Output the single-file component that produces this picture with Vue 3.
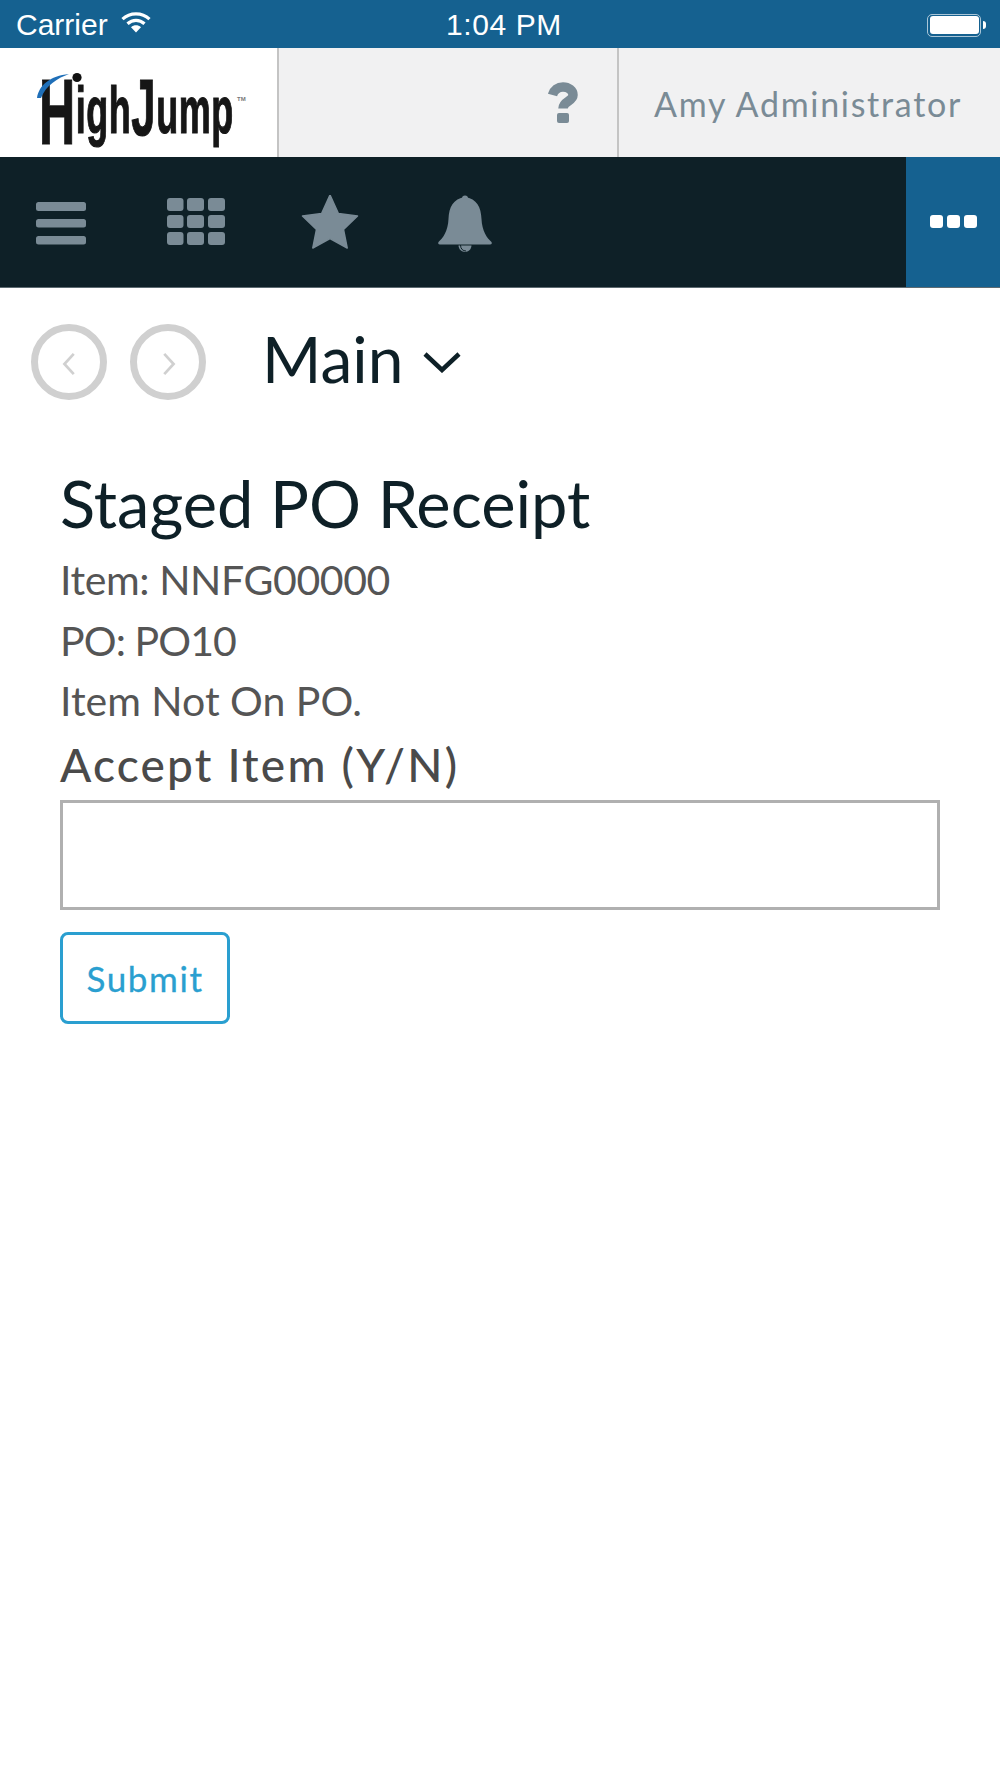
<script setup>
const lines = [
  { text: 'Item: NNFG00000', cls: 'wide' },
  { text: 'PO: PO10', cls: 'tight' },
  { text: 'Item Not On PO.', cls: 'plain' }
]
</script>

<template>
  <div class="page">
    <div class="status">
      <div class="status-left">
        <span>Carrier</span>
        <svg class="wifi" viewBox="0 0 30 22" width="30" height="22">
          <path d="M1.5 8.2C9 1 21 1 28.5 8.2" fill="none" stroke="#fff" stroke-width="3.2" />
          <path d="M6.5 12.8C11.5 8.2 18.5 8.2 23.5 12.8" fill="none" stroke="#fff" stroke-width="3.2" />
          <path d="M10 16.3C13 13.7 17 13.7 20 16.3L15 21.5Z" fill="#fff" />
        </svg>
      </div>
      <span class="time">1:04 PM</span>
      <div class="battery"><i class="battery-fill"></i><i class="battery-nub"></i></div>
    </div>

    <header class="top">
      <div class="logo">
        <svg class="swoosh" viewBox="0 0 50 30" width="50" height="30">
          <path d="M1 26C3 13 14 4 33 2C22 6 10 13 5 26Z" fill="#1f6fb8" />
          <circle cx="41" cy="5.5" r="4.6" fill="#111" />
        </svg>
        <div class="wordmark"><span class="big">H</span><span>igh</span><span class="bigj">J</span><span>ump</span></div>
        <span class="tm">TM</span>
      </div>
      <div class="help">
        <svg viewBox="0 0 30 41" width="30" height="41">
          <path d="M4.5 13C6 8 10 5 15 5C20.5 5 25 8.5 25 13C25 19.5 15 19 15 26.5" fill="none" stroke="#7a8b96" stroke-width="9.5" />
          <rect x="9" y="31" width="12" height="10" rx="2" fill="#7a8b96" />
        </svg>
      </div>
      <div class="user">Amy Administrator</div>
    </header>

    <nav class="nav">
      <div class="nav-icons">
        <svg viewBox="0 0 60 60" width="60" height="60">
          <rect x="5" y="7" width="50" height="9" rx="2.5" />
          <rect x="5" y="24" width="50" height="8.5" rx="2.5" />
          <rect x="5" y="41" width="50" height="8.5" rx="2.5" />
        </svg>
        <svg viewBox="0 0 60 60" width="60" height="60">
          <rect x="1" y="3" width="16.500" height="13" rx="3" /><rect x="21" y="3" width="17" height="13" rx="3" /><rect x="42" y="3" width="17" height="13" rx="3" />
          <rect x="1" y="20" width="16.500" height="13" rx="3" /><rect x="21" y="20" width="17" height="13" rx="3" /><rect x="42" y="20" width="17" height="13" rx="3" />
          <rect x="1" y="37" width="16.500" height="13" rx="3" /><rect x="21" y="37" width="17" height="13" rx="3" /><rect x="42" y="37" width="17" height="13" rx="3" />
        </svg>
        <svg viewBox="0 0 60 60" width="60" height="60">
          <path d="M30 0L38.400 18.500L57.500 21L43.500 34.500L47.200 53L30 43.600L12.800 53L16.500 34.500L2.500 21L21.600 18.500Z" stroke-width="1.500" stroke="#7a8b96" stroke-linejoin="round" />
        </svg>
        <svg viewBox="0 0 60 60" width="60" height="60">
          <circle cx="30" cy="3.500" r="3" />
          <path d="M30 2C18 4 14 12 13.500 24C13 36 8 43 3.500 47C3 48 3 49.500 5 49.500H55C57 49.500 57 48 56.500 47C52 43 47 36 46.500 24C46 12 42 4 30 2Z" />
          <path d="M23.500 50.500C24 59 36 59 36.500 50.500Z" />
          <path d="M25.500 50C25.500 54 28 56 31 56" fill="none" stroke="#0e2027" stroke-width="1" />
        </svg>
      </div>
      <div class="more"><i></i><i></i><i></i></div>
    </nav>

    <div class="crumbs">
      <button class="round" type="button">
        <svg viewBox="0 0 20 28" width="17" height="24"><path d="M15 2L4 14L15 26" fill="none" stroke="#d0d0d0" stroke-width="3.200" /></svg>
      </button>
      <button class="round" type="button">
        <svg viewBox="0 0 20 28" width="17" height="24"><path d="M5 2L16 14L5 26" fill="none" stroke="#d0d0d0" stroke-width="3.200" /></svg>
      </button>
      <div class="main-menu">
        <span>Main</span>
        <svg viewBox="0 0 38 22" width="38" height="22"><path d="M2 3L19 19L36 3" fill="none" stroke="#0e2027" stroke-width="4.500" /></svg>
      </div>
    </div>

    <main class="form">
      <h1>Staged PO Receipt</h1>
      <p v-for="line in lines" :key="line.text" :class="line.cls">{{ line.text }}</p>
      <label for="acc">Accept Item (Y/N)</label>
      <input id="acc" type="text" />
      <button class="submit" type="button">Submit</button>
    </main>
  </div>
</template>

<style>
html, body { margin: 0; background: #fff; }
</style>

<style scoped>
.page { width: 1000px; min-height: 1778px; background: #fff; font-family: "Lato", "Noto Sans", sans-serif; overflow: hidden; }

.status { height: 48px; box-sizing: border-box; background: #156190; color: #fff; display: grid; grid-template-columns: 1fr auto 1fr; align-items: center; padding: 1px 17px 0 16px; font: 30px/48px "Liberation Sans", Arial, sans-serif; }
.status-left { display: flex; align-items: center; gap: 13px; }
.wifi { margin-top: -7px; }
.time { margin-left: 9px; letter-spacing: .6px; }
.battery { justify-self: end; position: relative; width: 54px; height: 23px; box-sizing: border-box; border: 1.5px solid #a9c6d8; border-radius: 5px; padding: 1.5px; margin-right: 2px; }
.battery-fill { display: block; height: 100%; background: #fff; border-radius: 3px; }
.battery-nub { position: absolute; right: -6px; top: 6px; width: 3px; height: 8px; background: #fff; border-radius: 0 3px 3px 0; }

.top { height: 109px; display: flex; background: #f1f1f2; }
.logo { width: 277px; flex: none; background: #fff; border-right: 2px solid #c4c4c4; position: relative; }
.swoosh { position: absolute; left: 36px; top: 24px; z-index: 1; }
.wordmark { position: absolute; left: 39px; top: 22px; color: #161616; font: 700 66px/80px "Liberation Sans", Arial, sans-serif; transform: scaleX(.545); transform-origin: left; white-space: nowrap; filter: blur(.5px); letter-spacing: 1px; -webkit-text-stroke: 1.2px #161616; }
.big { font-size: 92px; vertical-align: -11px; line-height: 0; }
.bigj { font-size: 80px; vertical-align: -2px; line-height: 0; }
.tm { position: absolute; left: 237px; top: 47px; font: 700 6px/8px "Liberation Sans", sans-serif; color: #777; }
.help { box-sizing: border-box; border-right: 2px solid #c4c4c4; width: 340px; display: flex; justify-content: flex-end; align-items: flex-start; padding: 34px 39px 0 0; }
.user { flex: 1; padding: 28px 0 0 35px; font-size: 34px; line-height: 56px; letter-spacing: 1.7px; color: #7a8b96; white-space: nowrap; }

.nav { height: 131px; background: #0e2027; border-bottom: 1px solid #5d6b72; box-sizing: border-box; display: flex; justify-content: space-between; }
.nav-icons { display: flex; gap: 74.5px; padding: 38px 0 0 31px; align-items: flex-start; }
.nav-icons svg { fill: #7a8b96; }
.more { width: 94px; background: #156190; display: flex; justify-content: center; align-items: flex-start; gap: 4px; padding-top: 58px; box-sizing: border-box; }
.more i { width: 13px; height: 13px; background: #fff; border-radius: 3px; }

.crumbs { display: flex; align-items: flex-start; padding: 36px 0 0 31px; gap: 23px; }
.round { width: 76px; height: 76px; box-sizing: border-box; border: 7px solid #d0d0d0; border-radius: 50%; background: #fff; display: flex; align-items: center; justify-content: center; padding: 0; margin: 0; }
.round svg { margin-top: 3px; }
.main-menu { margin-left: 33px; display: flex; align-items: center; gap: 20px; font-size: 64px; line-height: 76px; color: #0e2027; margin-top: -3px; }
.main-menu svg { margin-top: 6px; }

.form { padding: 63px 60px 0 60px; display: flex; flex-direction: column; align-items: flex-start; }
h1 { margin: 0 0 7px; font-size: 65px; font-weight: 400; line-height: 80px; color: #0e2027; }
p { margin: 0; font-size: 41px; line-height: 60.500px; color: #555; }
p.wide { letter-spacing: -.4px; }
p.tight { letter-spacing: -.9px; }
p.plain { letter-spacing: 0; }
label { font-size: 46px; font-weight: 500; line-height: 66px; color: #4a4a4a; letter-spacing: 2.200px; margin-bottom: 2px; }
input { width: 880px; height: 110px; box-sizing: border-box; margin: 0; border: 3px solid #b0b0b0; border-radius: 0; background: #fff; outline: none; }
.submit { margin-top: 22px; width: 170px; height: 92px; box-sizing: border-box; border: 3px solid #2a9fd0; border-radius: 8px; background: #fff; color: #2a9fd0; font: 35px "Lato", sans-serif; letter-spacing: 1.600px; padding: 0; -webkit-text-stroke: .3px #2a9fd0; }
</style>
